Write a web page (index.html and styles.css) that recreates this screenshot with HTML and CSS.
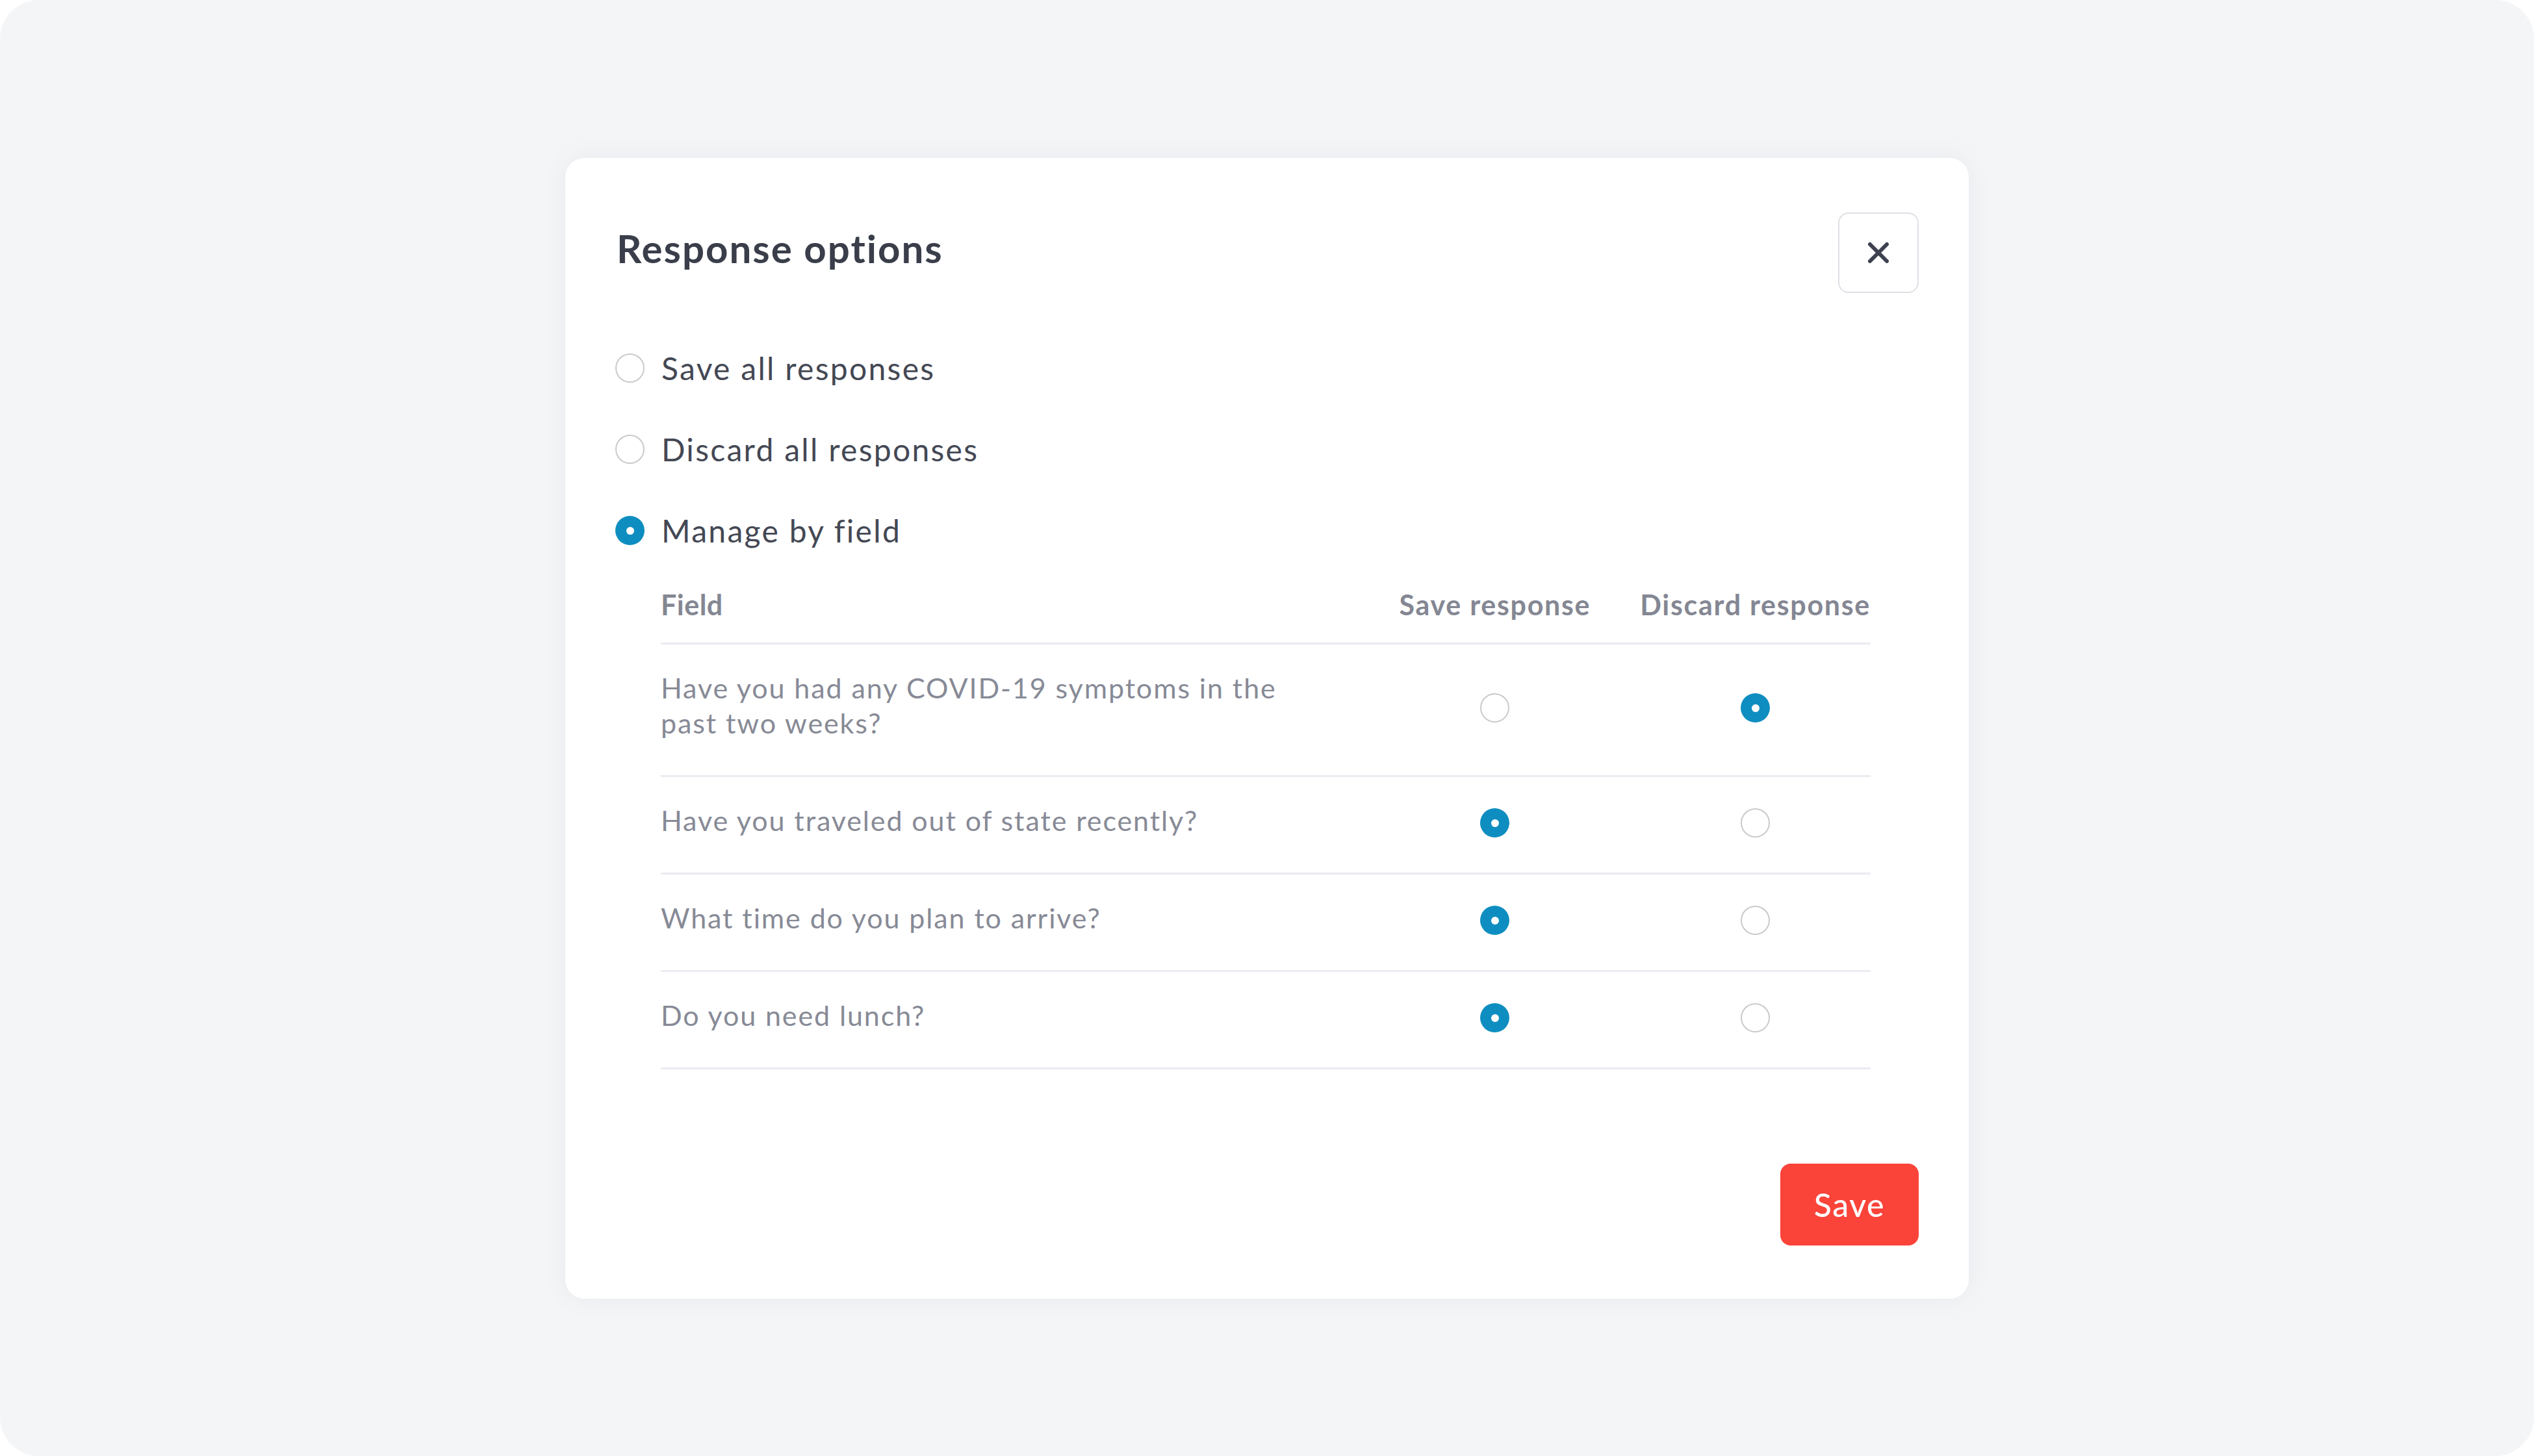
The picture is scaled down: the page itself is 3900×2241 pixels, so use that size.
FILE: index.html
```html
<!DOCTYPE html>
<html lang="en">
<head>
<meta charset="utf-8">
<title>Response options</title>
<link rel="stylesheet" href="styles.css">
</head>
<body>
<div class="screen">
  <div class="modal">
    <div class="modal-header">
      <h1 class="modal-title">Response options</h1>
      <button class="close-btn" aria-label="Close">
        <svg width="34" height="34" viewBox="0 0 34 34"><path d="M4 4 L30 30 M30 4 L4 30" stroke="#3d4150" stroke-width="6" stroke-linecap="round" fill="none"/></svg>
      </button>
    </div>
    <div class="options">
      <label class="option"><span class="radio"></span><span class="option-label">Save all responses</span></label>
      <label class="option"><span class="radio"></span><span class="option-label">Discard all responses</span></label>
      <label class="option"><span class="radio checked"></span><span class="option-label">Manage by field</span></label>
    </div>
    <div class="field-table">
      <div class="th th-field">Field</div>
      <div class="th th-col">Save response</div>
      <div class="th th-col">Discard response</div>

      <div class="td td-field"><span class="q">Have you had any COVID-19 symptoms in the past two weeks?</span></div>
      <div class="td td-col"><span class="radio"></span></div>
      <div class="td td-col"><span class="radio checked"></span></div>

      <div class="td td-field"><span class="q">Have you traveled out of state recently?</span></div>
      <div class="td td-col"><span class="radio checked"></span></div>
      <div class="td td-col"><span class="radio"></span></div>

      <div class="td td-field"><span class="q">What time do you plan to arrive?</span></div>
      <div class="td td-col"><span class="radio checked"></span></div>
      <div class="td td-col"><span class="radio"></span></div>

      <div class="td td-field"><span class="q">Do you need lunch?</span></div>
      <div class="td td-col"><span class="radio checked"></span></div>
      <div class="td td-col"><span class="radio"></span></div>
    </div>
    <div class="modal-footer">
      <button class="save-btn">Save</button>
    </div>
  </div>
</div>
</body>
</html>
```

FILE: styles.css
```css
html, body {
  margin: 0;
  padding: 0;
  background: #ffffff;
}

body {
  font-family: "Lato", "Noto Sans", sans-serif;
  width: 3900px;
  height: 2241px;
}

.screen {
  width: 3900px;
  height: 2241px;
  background: #f4f5f7;
  border-radius: 60px;
  display: flex;
  align-items: center;
  justify-content: center;
}

.modal {
  width: 2160px;
  box-sizing: border-box;
  background: #ffffff;
  border-radius: 30px;
  padding: 84px 77px 82px 77px;
  box-shadow: 0 0 40px rgba(30, 35, 60, 0.05);
  display: flex;
  flex-direction: column;
}

.modal-header {
  display: flex;
  align-items: center;
  justify-content: space-between;
  height: 124px;
}

.modal-title {
  margin: 0 0 14px 2px;
  font-size: 60px;
  font-weight: 700;
  color: #3a3e4a;
  letter-spacing: 2px;
}

.close-btn {
  width: 124px;
  height: 124px;
  box-sizing: border-box;
  border: 2px solid #dfe0e6;
  border-radius: 16px;
  background: #ffffff;
  display: flex;
  align-items: center;
  justify-content: center;
  padding: 0;
}

.options {
  display: flex;
  flex-direction: column;
  gap: 65px;
  margin-top: 86px;
}

.option {
  display: flex;
  align-items: center;
  height: 60px;
  gap: 26px;
}

.option-label {
  font-size: 48px;
  color: #444854;
  letter-spacing: 2.3px;
}

.radio {
  width: 45px;
  height: 45px;
  box-sizing: border-box;
  border-radius: 50%;
  border: 2px solid #c9cacd;
  background: #ffffff;
  flex: none;
  display: inline-block;
  position: relative;
}

.radio.checked {
  border: none;
  background: #0e8ec0;
}

.radio.checked::after {
  content: "";
  position: absolute;
  left: 50%;
  top: 50%;
  width: 12px;
  height: 12px;
  margin: -6px 0 0 -6px;
  border-radius: 50%;
  background: #ffffff;
}

.field-table {
  margin-top: 56px;
  margin-left: 70px;
  margin-right: 74px;
  display: grid;
  grid-template-columns: 1fr auto auto;
}

.th {
  font-size: 43px;
  font-weight: 700;
  color: #848793;
  line-height: 56px;
  padding-bottom: 30px;
  border-bottom: 3px solid #ebebf1;
  letter-spacing: 1.7px;
  white-space: nowrap;
}

.th-field {
  letter-spacing: 0.5px;
}

.th-col {
  padding-left: 76px;
  text-align: center;
}

.td {
  padding: 44px 0 49px 0;
  border-bottom: 3px solid #ebebf1;
  display: flex;
  align-items: center;
}

.td-field {
  font-size: 43px;
  line-height: 54px;
  color: #878a96;
  letter-spacing: 1.9px;
}

.q {
  max-width: 1000px;
  margin-top: -4px;
  margin-bottom: 4px;
}

.td-col {
  padding-left: 76px;
  justify-content: center;
}

.modal-footer {
  display: flex;
  justify-content: flex-end;
  margin-top: 145px;
}

.save-btn {
  width: 213px;
  height: 126px;
  border: none;
  border-radius: 16px;
  background: #fa4339;
  color: #ffffff;
  font-family: "Lato", "Noto Sans", sans-serif;
  font-size: 50px;
  font-weight: 500;
  letter-spacing: 1.6px;
  padding: 0;
}
```
